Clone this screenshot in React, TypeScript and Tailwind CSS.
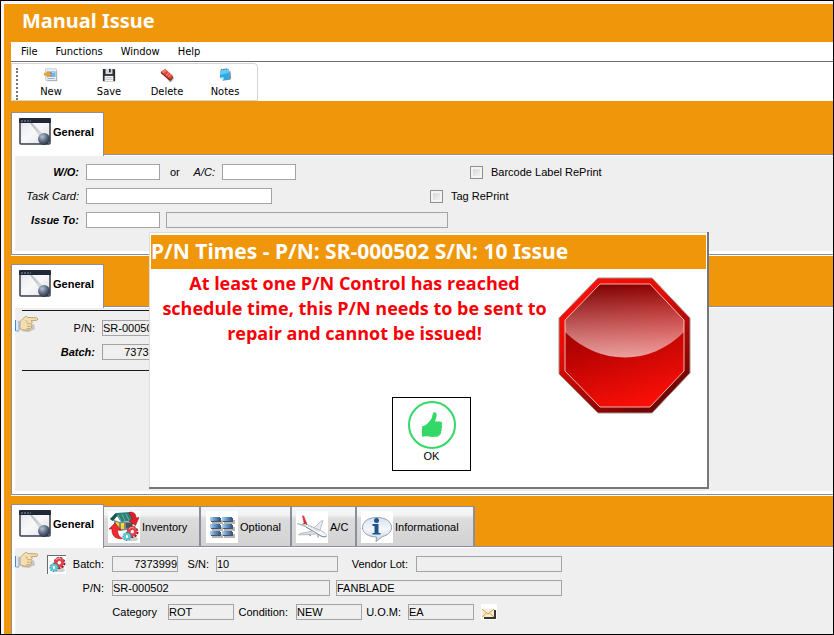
import type { InputHTMLAttributes, ReactNode } from "react";
import clsx from "clsx";

/* ---------- icons ---------- */

function NewIcon() {
  return (
    <svg width="16" height="16" viewBox="0 0 16 16">
      <path d="M4 3h11v12H4z" fill="#8e939c" />
      <rect x="2" y="1" width="12" height="13" fill="#eef2f8" stroke="#b3bdcc" strokeWidth=".8" />
      <rect x="3" y="4" width="10" height="6" fill="#5f95d4" />
      <path d="M9 5.500h3M9 8h1M11 8h1" stroke="#fff" />
      <path d="M4 12h8" stroke="#8ba3c0" />
      <path d="M0 5.500h4V3l4.500 4L4 11V8.500H0z" fill="#f0a41c" />
    </svg>
  );
}

function SaveIcon() {
  return (
    <svg width="16" height="16" viewBox="0 0 16 16">
      <path d="M1 1h13l1 1v13H1z" fill="#2a2b31" />
      <rect x="4" y="1" width="8" height="6" fill="#d5d8de" />
      <rect x="8" y="1" width="2" height="4" fill="#2a2b31" />
      <rect x="3" y="9" width="10" height="6" fill="#f7f7f7" />
      <path d="M4 11h8M4 13h8" stroke="#b9bcc4" />
    </svg>
  );
}

function DeleteIcon() {
  return (
    <svg width="16" height="16" viewBox="0 0 16 16">
      <path d="M4 8l8-1 4 5-3 4h-2z" fill="#b9b4b2" />
      <path d="M1 4l5-3 9 8-3 5z" fill="#e04434" />
      <path d="M1 4l5-3 2 2-5 4z" fill="#f07c6c" />
      <path d="M6 9l5-4M8 11l5-4" stroke="#f2b1a6" />
      <path d="M1 4l11 9v2L1 6z" fill="#8f1d14" />
      <path d="M15 9l-3 4v2l3-4z" fill="#5f3a34" />
    </svg>
  );
}

function NotesIcon() {
  return (
    <svg width="16" height="16" viewBox="0 0 16 16">
      <path d="M5 14.500l9-1 1-2-1-9z" fill="#8d8d8d" />
      <path d="M3 2l9-1 2 11-8 2-4-3z" fill="#2fa9e6" />
      <path d="M3 2l9-1 1 4-10.300 3z" fill="#63cbf5" />
      <path d="M2 11l4.500-.5-.5 3.500z" fill="#d4f1fc" />
      <path d="M4 2.500V1M6 2.300V.8M8 2V.5M10 1.800V.3" stroke="#33506b" strokeWidth=".8" />
    </svg>
  );
}

function WindowIcon() {
  return (
    <svg width="33" height="28" viewBox="0 0 33 28" className="shrink-0">
      <defs>
        <linearGradient id="winBody" x1="0" y1="0" x2="1" y2="1">
          <stop offset="0" stopColor="#e3e4e7" />
          <stop offset=".5" stopColor="#f8f8f9" />
          <stop offset="1" stopColor="#dcdee2" />
        </linearGradient>
        <linearGradient id="winBeam" x1="0" y1="0" x2="1" y2="1">
          <stop offset="0" stopColor="#b2b5bb" />
          <stop offset="1" stopColor="#e6e7ea" />
        </linearGradient>
        <radialGradient id="winBall" cx=".35" cy=".3" r=".8">
          <stop offset="0" stopColor="#b7c4d4" />
          <stop offset=".5" stopColor="#5c6b80" />
          <stop offset="1" stopColor="#1b2430" />
        </radialGradient>
      </defs>
      <rect x="1" y="1" width="30" height="25" rx="1" fill="url(#winBody)" stroke="#343c4c" strokeWidth="1.500" />
      <path d="M11 5h2l13 13-4 2z" fill="url(#winBeam)" />
      <rect x="0" y="0" width="32" height="5" rx="1" fill="#1f2838" />
      <path d="M2 3h10" stroke="#8692a6" strokeDasharray="2 1" />
      <circle cx="25" cy="21" r="6" fill="url(#winBall)" />
    </svg>
  );
}

function HandIcon() {
  return (
    <svg width="24" height="18" viewBox="0 0 24 18" className="shrink-0">
      <path d="M6 16l8 1 6-3-1-5z" fill="#c9c6bf" />
      <path d="M0 5h1v11H0z" fill="#4c87c8" />
      <path d="M1 5h3v11H1z" fill="#dbe9f7" />
      <path d="M1 16h3V6" fill="none" stroke="#7fa9d6" />
      <path
        d="M5 6.500C7 5 8.500 2.800 10.500 1.500c1.200-.6 2 .2 2.300 1l8.700.3c1.600.1 1.700 2.500 0 2.600l-5.500.3c1.600.8 1.600 2.300.4 2.900.9.900.6 2.200-.3 2.600.5 1 .1 1.900-.8 2.200-.1 1.200-1 1.700-2.300 1.700H9L5 14z"
        fill="#f3deb3"
        stroke="#b5955e"
        strokeWidth=".8"
      />
      <path d="M10.500 5.500c1.500.3 2 1.300 1 2.500M12 8.700h4M12 11.300h3.500M11.500 13.500h3" fill="none" stroke="#b5955e" strokeWidth=".7" />
    </svg>
  );
}

function Gears() {
  return (
    <g fill="none">
      <ellipse cx="12" cy="14" rx="5" ry="2" fill="#cfcfcf" />
      <circle cx="11.500" cy="7" r="4" stroke="#8e1c26" strokeWidth="4" strokeDasharray="1.800 .9" />
      <circle cx="11" cy="6.500" r="3.500" stroke="#e5414c" strokeWidth="3" />
      <path d="M8 4c1-1.500 3-2 5-1" stroke="#f3a2a6" />
      <circle cx="6" cy="11.500" r="3" fill="#fff" stroke="#2793a1" strokeWidth="3" strokeDasharray="1.400 .7" />
      <circle cx="6" cy="11.500" r="2.600" stroke="#5ccbd8" strokeWidth="2" />
    </g>
  );
}

function InventoryIcon() {
  return (
    <svg width="32" height="32" viewBox="0 0 32 32" className="shrink-0">
      <rect width="32" height="32" fill="#fff" />
      <path d="M6 9l6 2 13-1v8l-13 2-6-3z" fill="#7f8a88" />
      <path d="M8 11l3 1v6l-3-1zM13 12h3v6h-3z" fill="#f0dc2c" />
      <path d="M18 12h6v5h-6z" fill="#4b5654" />
      <path d="M2 8l6-6 14-1 4 8-13 2L9 5l-4 5z" fill="#2c8077" />
      <path d="M10 4l3 6M14 3l3 7M18 3l3 6" stroke="#79bfb3" strokeWidth=".8" />
      <path d="M2 8l6-6 1 3-4 5z" fill="#1c544f" />
      <path d="M1 18l6-6 6 7-3.500 0c0 4 1.500 7 5 8.500C8 28.500 3.500 25 4 18z" fill="#ef2b2f" stroke="#a90f16" strokeWidth=".6" />
      <path d="M22 1c4 0 6 2 6 6l3-.5-3.500 8L21 10l3-1c0-3-1-5-3-6z" fill="#e01f26" stroke="#a30f16" strokeWidth=".6" />
      <g transform="translate(13 14)">
        <Gears />
      </g>
    </svg>
  );
}

function OptionalIcon() {
  const cells = [0, 1, 2].flatMap((r) => [0, 1].map((c) => ({ x: 4 + c * 12, y: 6 + r * 7 })));
  return (
    <svg width="32" height="32" viewBox="0 0 32 32" className="shrink-0">
      <defs>
        <linearGradient id="cellFill" x1="0" y1="0" x2="1" y2="0">
          <stop offset="0" stopColor="#b3d3ef" />
          <stop offset=".5" stopColor="#5f94c6" />
          <stop offset="1" stopColor="#2d5c8f" />
        </linearGradient>
      </defs>
      <rect width="32" height="32" fill="#fff" />
      {cells.map(({ x, y }) => (
        <g key={`${x}-${y}`}>
          <rect x={x + 2} y={y + 3} width="11" height="4" fill="#b5b5b5" />
          <rect x={x + 1} y={y + 1} width="10" height="4" fill="#4b535e" />
          <rect x={x} y={y} width="10" height="4" fill="url(#cellFill)" />
        </g>
      ))}
    </svg>
  );
}

function PlaneIcon() {
  return (
    <svg width="32" height="32" viewBox="0 0 32 32" className="shrink-0">
      <rect width="32" height="32" fill="#fff" />
      <path d="M18 17l7-7 2-.5-3 10z" fill="#e6e9ed" stroke="#9aa3b0" strokeWidth=".6" />
      <path d="M1 12.500l7 1.500 1 1.500z" fill="#cdd3da" stroke="#9aa3b0" strokeWidth=".6" />
      <path d="M8 12l15 7c4 1.500 7 3.500 7.500 5.500 0 1.500-3 1.500-5.500 .5L10 16z" fill="#f8f9fa" stroke="#9aa3b0" strokeWidth=".7" />
      <path d="M10 16l15 9c2.500 1 4.500 1 5.500.3" fill="none" stroke="#6f7a89" strokeWidth=".8" />
      <path d="M17 20L4 22.500l-1.500 1.500L21 23z" fill="#dfe3e8" stroke="#8e98a6" strokeWidth=".6" />
      <path d="M6 4.500l2 .2 3 7.800-3 .5z" fill="#e03a42" />
      <path d="M8 10l3 4M6.500 13l4-1" stroke="#b8222b" strokeWidth=".8" />
      <path d="M12 15l11 5.500" stroke="#7c93b5" strokeWidth=".6" strokeDasharray="1 .8" />
      <path d="M13 23.500l2 1.500M22 24v2.500" stroke="#7b8491" />
    </svg>
  );
}

function InfoIcon() {
  return (
    <svg width="32" height="32" viewBox="0 0 32 32" className="shrink-0">
      <defs>
        <linearGradient id="infoBubble" x1="0" y1="0" x2="0" y2="1">
          <stop offset="0" stopColor="#d7e1ef" />
          <stop offset=".5" stopColor="#f5f8fc" />
          <stop offset="1" stopColor="#c2d0e5" />
        </linearGradient>
      </defs>
      <rect width="32" height="32" fill="#fff" />
      <path
        d="M16 6.500c8.500 0 14.500 4 14.500 10 0 5-4.500 8-9 9l-6.500 5 .5-4.500c-8-.2-14-4-14-9.500 0-6 6-10 14.500-10z"
        fill="url(#infoBubble)"
        stroke="#8f9db5"
      />
      <circle cx="15.500" cy="9.500" r="2.500" fill="#1f5389" />
      <path d="M11.500 13h6v9h2v1.500h-8V22h2v-7h-2z" fill="#1f5389" />
    </svg>
  );
}

function MailIcon() {
  return (
    <svg width="16" height="16" viewBox="0 0 16 16" className="shrink-0">
      <rect width="16" height="16" fill="#fff" />
      <path d="M3 6h12v9H3z" fill="#3a3730" />
      <rect x="1" y="5" width="12" height="8" fill="#f4ecd8" />
      <path d="M1 5l6 5 6-5M1 13l4.500-4M13 13L8.500 9" fill="none" stroke="#e0a03c" />
    </svg>
  );
}

function ThumbIcon() {
  return (
    <svg width="48" height="48" viewBox="0 0 48 48">
      <circle cx="24" cy="24" r="23" fill="none" stroke="#33d866" strokeWidth="2" />
      <path
        d="M14 25.500c4-1 7-4 9.500-8 1.200-2 .8-5 2-6 1.500-1 3.300.2 3.200 2.500-.1 2.500-1.200 4.500-1.700 6.500h5c2.500.2 2.700 2.500 1.500 3.500 1 .8 1 2.700-.1 3.500.7 1 .5 2.600-.6 3.200.5 1.200.1 2.500-1.100 3-.6 1.500-2 2-4 2.100-3 .2-5 .2-7-.2-2.500-.5-4.200-.6-6.700.2z"
        fill="#33d866"
      />
    </svg>
  );
}

function StopSign() {
  return (
    <svg width="134" height="138" viewBox="0 0 134 138" className="shrink-0">
      <defs>
        <linearGradient id="stopRim" x1="0" y1="0" x2=".6" y2="1">
          <stop offset="0" stopColor="#ff1208" />
          <stop offset=".4" stopColor="#e80c06" />
          <stop offset="1" stopColor="#6f0504" />
        </linearGradient>
        <linearGradient id="stopFace" x1=".3" y1="0" x2=".6" y2="1">
          <stop offset="0" stopColor="#7d0000" />
          <stop offset=".5" stopColor="#bc0403" />
          <stop offset="1" stopColor="#fb0f07" />
        </linearGradient>
        <linearGradient id="stopGloss" x1="0" y1="0" x2="0" y2="1">
          <stop offset="0" stopColor="#fff" stopOpacity="0" />
          <stop offset="1" stopColor="#fff" stopOpacity=".62" />
        </linearGradient>
      </defs>
      <path d="M40 1h54l38 40v55l-38 40H40L1 97V41z" fill="url(#stopRim)" stroke="#a4908c" strokeWidth="1" />
      <path d="M42 7h50l34 36v51l-34 36H42L7 94V43z" fill="url(#stopFace)" stroke="#f3b3aa" strokeWidth="1" />
      <path d="M42 7h50l34 36v12C92 89 42 89 7 55V43z" fill="url(#stopGloss)" />
    </svg>
  );
}

/* ---------- form parts ---------- */

type FieldProps = InputHTMLAttributes<HTMLInputElement>;

function Field({ className, readOnly, ...rest }: FieldProps) {
  return (
    <input
      type="text"
      readOnly={readOnly}
      className={clsx(
        "h-4 shrink-0 border border-[#a3a3a6] outline-none",
        readOnly ? "bg-[#efefef]" : "bg-white",
        className,
      )}
      {...rest}
    />
  );
}

function Check({ id, label }: { id: string; label: string }) {
  return (
    <span className="flex items-center gap-2">
      <input
        id={id}
        type="checkbox"
        className="size-[13px] appearance-none border border-[#8e8f8f] bg-linear-to-br from-[#cdd1d6] to-[#f8f8f8] shadow-[inset_0_0_0_2px_#f4f4f4]"
      />
      <label htmlFor={id}>{label}</label>
    </span>
  );
}

function GeneralTab() {
  return (
    <button
      type="button"
      className="relative z-10 -mb-0.5 flex h-11 w-[93px] items-center gap-px border border-b-0 border-[#8c8e9c] bg-white pb-[5px] pl-[7px] font-bold"
    >
      <WindowIcon />
      General
    </button>
  );
}

function SideTab({ icon, children, className }: { icon: ReactNode; children: ReactNode; className: string }) {
  return (
    <button
      type="button"
      className={clsx(
        "flex h-10 items-center gap-0.5 border-t border-r-2 border-[#8c8e9c] bg-linear-to-b from-[#f4f4f4] from-20% via-[#dcdcdc] via-30% to-[#d2d2d2]",
        className,
      )}
    >
      {icon}
      {children}
    </button>
  );
}

function Panel({ tabs, children, className }: { tabs?: ReactNode; children: ReactNode; className?: string }) {
  return (
    <section className={clsx("flex flex-col", className)}>
      <div className="flex items-end">
        <GeneralTab />
        {tabs}
      </div>
      <div className="flex grow flex-col border-y border-l border-[#8c8e9c] bg-white pt-px pb-[3px] pl-[3px]">
        <div className="grow bg-[#efefef]">{children}</div>
      </div>
      <div className="h-px bg-white" />
    </section>
  );
}

/* ---------- page ---------- */

const menus = ["File", "Functions", "Window", "Help"];

const tools = [
  { label: "New", icon: <NewIcon /> },
  { label: "Save", icon: <SaveIcon /> },
  { label: "Delete", icon: <DeleteIcon /> },
  { label: "Notes", icon: <NotesIcon /> },
];

function AlertDialog() {
  return (
    <div
      role="dialog"
      aria-labelledby="alert-title"
      className="absolute top-[231px] left-[148px] z-20 w-[560px] border-r-2 border-b-2 border-[#77777b] bg-white pt-[3px] pr-px pb-4 pl-0.5 shadow-[inset_1px_1px_0_#dedede]"
    >
      <h2
        id="alert-title"
        className="h-[34px] bg-[#f0960a] font-['Noto_Sans',sans-serif] text-[21px] leading-[32px] font-bold whitespace-nowrap text-white"
      >
        P/N Times - P/N: SR-000502 S/N: 10 Issue
      </h2>
      <div className="flex pt-0.5">
        <p className="h-[126px] w-[407px] text-center font-['Open_Sans','Noto_Sans',sans-serif] text-[18px] leading-[25px] font-bold text-[#f90006]">
          At least one P/N Control has reached
          <br />
          schedule time, this P/N needs to be sent to
          <br />
          repair and cannot be issued!
        </p>
        <div className="pt-1.5">
          <StopSign />
        </div>
      </div>
      <button
        type="button"
        className="-mt-[18px] ml-[241px] flex h-[74px] w-[79px] flex-col items-center border border-black bg-white pt-[3px] leading-[14px]"
      >
        <ThumbIcon />
        OK
      </button>
    </div>
  );
}

export default function App() {
  return (
    <div className="relative flex min-h-screen flex-col border border-black bg-[#f8f4fa] pt-[3px] pl-[3px] font-['Liberation_Sans',Arial,sans-serif] text-[11px] leading-4 text-black">
      <div className="flex grow flex-col overflow-hidden bg-[#f0960a] pl-[7px]">
        <h1 className="h-[38px] pl-[11px] font-['Noto_Sans',sans-serif] text-[20px] leading-[34px] font-bold text-white">
          Manual Issue
        </h1>

        <nav className="flex h-5 items-center gap-[18px] border-b border-[#6d6d75] bg-white pl-[10px] font-['DejaVu_Sans_Condensed','DejaVu_Sans',sans-serif]">
          {menus.map((m) => (
            <button key={m} type="button">
              {m}
            </button>
          ))}
        </nav>

        <div className="flex h-[39px] bg-white pt-px font-['DejaVu_Sans_Condensed','DejaVu_Sans',sans-serif]">
          <div className="flex w-[247px] rounded-tr border border-[#d4d4d8] pt-1">
            <div className="mr-1 ml-1 w-px border-l-2 border-dotted border-[#77777b]" />
            {tools.map((t) => (
              <button key={t.label} type="button" className="flex w-[58px] flex-col items-center gap-0.5">
                {t.icon}
                {t.label}
              </button>
            ))}
          </div>
        </div>

        <Panel className="mt-[11px]">
          <div className="flex pt-2 pb-[23px]">
            <div className="flex w-[433px] flex-col gap-2">
              <div className="flex items-center">
                <label htmlFor="wo" className="mr-[7px] w-16 text-right font-bold italic">
                  W/O:
                </label>
                <Field id="wo" className="w-[74px]" />
                <span className="ml-[10px]">or</span>
                <label htmlFor="ac" className="mr-[7px] ml-auto italic">
                  A/C:
                </label>
                <Field id="ac" className="mr-[152px] w-[74px]" />
              </div>
              <div className="flex items-center">
                <label htmlFor="task" className="mr-[7px] w-16 text-right italic">
                  Task Card:
                </label>
                <Field id="task" className="w-[186px]" />
              </div>
              <div className="flex items-center">
                <label htmlFor="issue" className="mr-[7px] w-16 text-right font-bold italic">
                  Issue To:
                </label>
                <Field id="issue" className="w-[74px]" />
                <Field readOnly aria-label="Issue to name" className="ml-1.5 w-[282px]" />
              </div>
            </div>
            <div className="-ml-[18px] flex flex-col gap-2">
              <div className="pl-10">
                <Check id="barcode" label="Barcode Label RePrint" />
              </div>
              <Check id="tag" label="Tag RePrint" />
            </div>
          </div>
        </Panel>

        <Panel className="mt-2">
          <div className="pt-0.5 pb-[120px] pl-[7px]">
            <div className="flex w-[400px] flex-col gap-2 border-y border-[#1a1a1a] pt-[9px] pb-[10px]">
              <div className="flex h-4 items-center">
                <span className="-mt-2 -ml-[7px]">
                  <HandIcon />
                </span>
                <label htmlFor="pn" className="mr-[7px] w-14 text-right">
                  P/N:
                </label>
                <Field id="pn" readOnly defaultValue="SR-000502" className="w-[218px]" />
              </div>
              <div className="flex items-center">
                <label htmlFor="batch" className="mr-[7px] w-[73px] text-right font-bold italic">
                  Batch:
                </label>
                <Field id="batch" readOnly defaultValue="7373999" className="w-[66px] text-right" />
              </div>
            </div>
          </div>
        </Panel>

        <Panel
          className="mt-2 -mb-[5px] grow"
          tabs={
            <>
              <SideTab icon={<InventoryIcon />} className="w-[97px] pl-1">
                Inventory
              </SideTab>
              <SideTab icon={<OptionalIcon />} className="w-[91px] pl-[5px]">
                Optional
              </SideTab>
              <SideTab icon={<PlaneIcon />} className="w-[65px] pl-1">
                A/C
              </SideTab>
              <SideTab icon={<InfoIcon />} className="w-[118px] pl-1">
                Informational
              </SideTab>
            </>
          }
        >
          <div className="flex flex-col gap-2 pt-2">
            <div className="flex h-4 items-center">
              <span className="-mt-2">
                <HandIcon />
              </span>
              <button
                type="button"
                aria-label="Batch details"
                className="ml-2 size-[19px] shrink-0 border-t border-l border-[#6b6b6b] bg-white"
              >
                <svg width="18" height="18" viewBox="0 0 18 18">
                  <Gears />
                </svg>
              </button>
              <label htmlFor="batch2" className="mr-2 w-[38px] text-right">
                Batch:
              </label>
              <Field id="batch2" readOnly defaultValue="7373999" className="w-[66px] text-right" />
              <label htmlFor="sn" className="mr-[7px] w-[31px] text-right">
                S/N:
              </label>
              <Field id="sn" readOnly defaultValue="10" className="w-[122px]" />
              <label htmlFor="lot" className="mr-2 w-[70px] text-right">
                Vendor Lot:
              </label>
              <Field id="lot" readOnly className="w-[146px]" />
            </div>
            <div className="flex items-center">
              <label htmlFor="pn2" className="mr-2 w-[89px] text-right">
                P/N:
              </label>
              <Field id="pn2" readOnly defaultValue="SR-000502" className="w-[218px]" />
              <Field readOnly aria-label="Description" defaultValue="FANBLADE" className="ml-1.5 w-[226px]" />
            </div>
            <div className="flex items-center">
              <label htmlFor="category" className="mr-[11px] w-[142px] text-right">
                Category
              </label>
              <Field id="category" readOnly defaultValue="ROT" className="w-[66px]" />
              <label htmlFor="condition" className="mr-2 w-[54px] text-right">
                Condition:
              </label>
              <Field id="condition" readOnly defaultValue="NEW" className="w-[66px]" />
              <label htmlFor="uom" className="mr-[7px] w-[39px] text-right">
                U.O.M:
              </label>
              <Field id="uom" readOnly defaultValue="EA" className="w-[66px]" />
              <button type="button" aria-label="Mail" className="ml-[7px]">
                <MailIcon />
              </button>
            </div>
          </div>
        </Panel>
      </div>
      <AlertDialog />
    </div>
  );
}
